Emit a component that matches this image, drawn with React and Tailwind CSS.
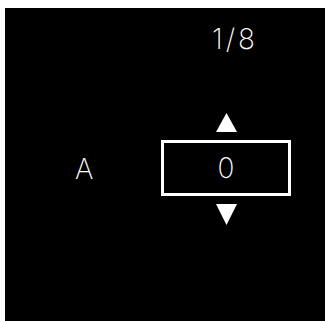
export default function App() {
  const font = { fontFamily: 'Inter, "Liberation Sans", Arial, sans-serif' };
  return (
    <div className="w-[325px] h-[321px] bg-white pl-[5px] pt-[8px]">
      <div className="w-full h-full bg-black flex flex-col text-white" style={font}>
        <div className="pt-[17px] pl-[207px] text-[28px] leading-[28px] font-extralight tracking-[3px]">1/8</div>
        <div className="mt-[60px] flex items-center pl-[70px]">
          <div className="w-[86px] text-[28px] leading-[28px] font-extralight">A</div>
          <div className="flex flex-col items-center w-[130px]">
            <svg width="21" height="19" viewBox="0 0 21 19" className="block">
              <polygon points="10.5,0 21,19 0,19" fill="white" />
            </svg>
            <div className="mt-[8px] w-[130px] h-[56px] border-[3px] border-white flex items-center justify-center text-[28px] leading-[28px] font-extralight">
              0
            </div>
            <svg width="21" height="21" viewBox="0 0 21 21" className="block mt-[8px]">
              <polygon points="0,0 21,0 10.5,21" fill="white" />
            </svg>
          </div>
        </div>
      </div>
    </div>
  );
}
